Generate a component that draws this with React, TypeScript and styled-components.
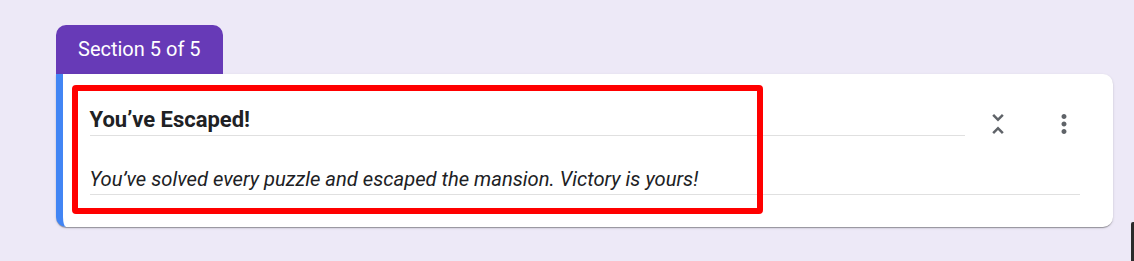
import styled, { createGlobalStyle } from 'styled-components'

const GlobalStyle = createGlobalStyle`
  html, body {
    margin: 0;
    padding: 0;
    background: #ede9f7;
    font-family: Roboto, 'Liberation Sans', Arial, sans-serif;
  }
`

const Page = styled.div`
  position: relative;
  width: 1134px;
  height: 261px;
  padding: 25px 21px 0 56px;
  box-sizing: border-box;
  overflow: hidden;
`

const Tab = styled.div`
  display: inline-flex;
  align-items: center;
  height: 49px;
  padding: 0 22px 2px 22px;
  box-sizing: border-box;
  background: #673ab7;
  color: #ffffff;
  font-size: 20px;
  border-radius: 10px 10px 0 0;
`

const Card = styled.div`
  position: relative;
  display: flex;
  background: #ffffff;
  border-left: 7.5px solid #4285f4;
  border-radius: 0 10px 10px 10px;
  box-shadow: 0 2px 1px -1px rgba(0, 0, 0, 0.2), 0 1px 1px 0 rgba(0, 0, 0, 0.14),
    0 1px 3px 0 rgba(0, 0, 0, 0.12);
  height: 153px;
  box-sizing: border-box;
  padding: 0 33px 0 26.5px;
`

const Body = styled.div`
  flex: 1;
  display: flex;
  flex-direction: column;
`

const TopRow = styled.div`
  display: flex;
  align-items: flex-start;
`

const Title = styled.div`
  flex: 1;
  font-size: 22px;
  font-weight: 700;
  color: #202124;
  line-height: 30px;
  padding: 31px 0 0;
  border-bottom: 1px solid #e0e0e0;
`

const Actions = styled.div`
  display: flex;
  align-items: center;
  gap: 36.5px;
  margin: 35px 1px 0 17.5px;
`

const IconButton = styled.button`
  display: flex;
  align-items: center;
  justify-content: center;
  width: 30px;
  height: 30px;
  padding: 0;
  border: none;
  background: none;
  color: #5f6368;
`

const Description = styled.div`
  margin-top: 28px;
  font-size: 20.2px;
  font-style: italic;
  color: #202124;
  line-height: 24px;
  padding-bottom: 3px;
  border-bottom: 1px solid #e0e0e0;
`

const Highlight = styled.div`
  position: absolute;
  left: 9px;
  top: 11px;
  width: 691px;
  height: 129px;
  box-sizing: border-box;
  border: 6px solid #ff0000;
  border-radius: 4px;
  pointer-events: none;
`

const EdgeStrip = styled.div`
  position: absolute;
  right: 0;
  top: 222px;
  width: 3px;
  height: 39px;
  background: #2b2b2b;
  border-radius: 2px 0 0 0;
`

const App = () => {
  return (
    <Page>
      <GlobalStyle />
      <Tab>Section 5 of 5</Tab>
      <Card>
        <Body>
          <TopRow>
            <Title>You’ve Escaped!</Title>
            <Actions>
              <IconButton aria-label="Collapse section">
                <svg width="30" height="30" viewBox="0 0 24 24" fill="currentColor">
                  <path d="M7.41 18.59L8.83 20 12 16.83 15.17 20l1.41-1.41L12 14l-4.59 4.59zm9.18-13.18L15.17 4 12 7.17 8.83 4 7.41 5.41 12 10l4.59-4.59z" />
                </svg>
              </IconButton>
              <IconButton aria-label="More options">
                <svg width="30" height="30" viewBox="0 0 24 24" fill="currentColor">
                  <path d="M12 8c1.1 0 2-.9 2-2s-.9-2-2-2-2 .9-2 2 .9 2 2 2zm0 2c-1.1 0-2 .9-2 2s.9 2 2 2 2-.9 2-2-.9-2-2-2zm0 6c-1.1 0-2 .9-2 2s.9 2 2 2 2-.9 2-2-.9-2-2-2z" />
                </svg>
              </IconButton>
            </Actions>
          </TopRow>
          <Description>
            You’ve solved every puzzle and escaped the mansion. Victory is yours!
          </Description>
        </Body>
        <Highlight />
      </Card>
      <EdgeStrip />
    </Page>
  )
}

export default App
